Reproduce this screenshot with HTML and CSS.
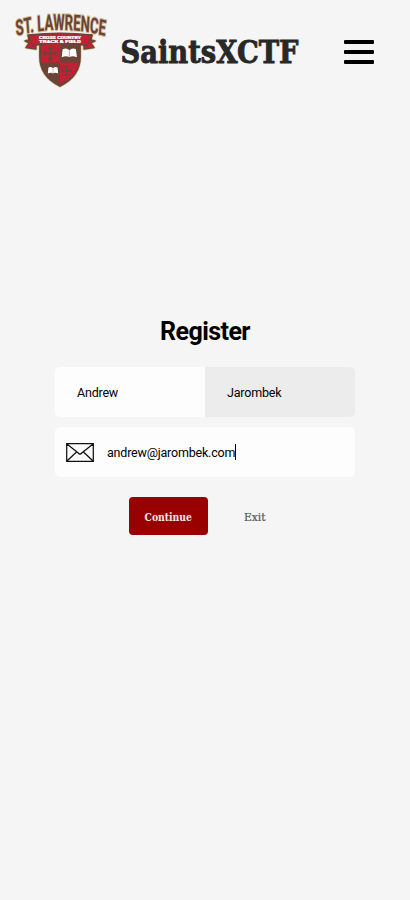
FILE: index.html
```html
<!DOCTYPE html>
<html lang="en">
<head>
<meta charset="utf-8">
<meta name="viewport" content="width=device-width, initial-scale=1">
<title>SaintsXCTF</title>
<link rel="stylesheet" href="styles.css">
</head>
<body>
<header class="nav">
  <svg class="logo" viewBox="10 8 100 84" role="img">
    <defs>
      <path id="arch" d="M27 36 Q100 23.8 175 36"/>
      <path id="shield" d="M40 42 Q60 34 80 42 L80 57 C80 71 72 80 60 86 C48 80 40 71 40 57 Z"/>
      <clipPath id="shield-clip"><use href="#shield"/></clipPath>
      <g id="cross" fill="none" stroke="#6b4436" stroke-width="1.9"><path d="M-6 0H6M0-6V6M-5-2V2M5-2V2M-2-5H2M-2 5H2"/></g>
      <g id="book"><path d="M-7-4Q-3-6 0-3Q3-6 7-4L8 4Q3 2 0 4Q-3 2-8 4Z" fill="#fff"/><path d="M0-3V4" stroke="#a77" stroke-width=".7"/></g>
    </defs>
    <use href="#shield" fill="#6b4436" stroke="#d8c298" stroke-width="3"/>
    <g clip-path="url(#shield-clip)">
      <path fill="#6b4436" d="M38 36H82V88H38Z"/>
      <path fill="#c41f35" d="M41 41H60V62.5H41ZM60 62.5H79L76 74L60 84Z"/>
    </g>
    <use href="#shield" fill="none" stroke="#6b4436" stroke-width="1.7"/>
    <use href="#cross" transform="translate(50.4 53.5) scale(1.12)"/>
    <use href="#cross" transform="translate(66.5 70.7) scale(.88)"/>
    <use href="#book" transform="translate(69.3 53.3) scale(.95 1)"/>
    <use href="#book" transform="translate(53 70.5) scale(.65 .75)"/>
    <g stroke-linejoin="round">
      <path class="ribbon-edge" d="M28 35L36 37V49L26 47.5L29 43L25 41L29 40ZM92 35L84 37V49L94 47.5L91 43L95 41L91 40Z"/>
      <path class="ribbon" d="M28 35L36 37V49L26 47.5L29 43L25 41L29 40ZM92 35L84 37V49L94 47.5L91 43L95 41L91 40Z"/>
      <path class="ribbon" d="M28 35Q60 31.5 92 35L87 45.5Q60 41 33 45.5Z"/>
    </g>
    <text class="motto" x="60" y="39.2" textLength="42" lengthAdjust="spacingAndGlyphs">CROSS COUNTRY</text>
    <text class="motto" x="60" y="42.6" textLength="42" lengthAdjust="spacingAndGlyphs">TRACK &amp; FIELD</text>
    <g transform="scale(.6 1)">
      <text class="school"><textPath href="#arch" textLength="149" lengthAdjust="spacingAndGlyphs">ST. LAWRENCE</textPath></text>
    </g>
  </svg>
  <svg class="brand" viewBox="0 0 181 40" role="img"><text x="0.5" y="31" textLength="178" lengthAdjust="spacingAndGlyphs">SaintsXCTF</text></svg>
  <div class="menu"><i></i><i></i><i></i></div>
</header>
<main class="register">
  <h1>Register</h1>
  <div class="field names">
    <div class="name">Andrew</div>
    <div class="name last">Jarombek</div>
  </div>
  <div class="field email">
    <svg class="envelope" viewBox="0 0 28 19"><path d="M.7.7H27.3V18.3H.7ZM.7.7L12.2 10Q14 12 15.8 10L27.3.7M.7 18.3L10.5 9M27.3 18.3L17.5 9"/></svg>
    <span class="address">andrew@jarombek.com</span><i class="caret"></i>
  </div>
  <div class="actions">
    <div class="button"><svg viewBox="0 0 50 18"><text x="1.5" y="13" textLength="47.5" lengthAdjust="spacingAndGlyphs">Continue</text></svg></div>
    <div class="exit"><svg viewBox="0 0 24 18"><text x="1" y="13" textLength="21.5" lengthAdjust="spacingAndGlyphs">Exit</text></svg></div>
  </div>
</main>
</body>
</html>
```
FILE: styles.css
```css
* { box-sizing: border-box; }
body { margin: 0; min-height: 900px; background: #f5f5f5; color: #000; font-family: Roboto, sans-serif; }
svg { display: block; }
.nav { height: 100px; display: flex; align-items: flex-start; padding: 8px 36px 0 10px; }
.logo { width: 100px; height: 84px; }
.school { font: 700 22px Roboto, sans-serif; fill: #6b4436; stroke: #d8c298; stroke-width: 2.2px; paint-order: stroke; }
.motto { font: 700 2.8px Roboto, sans-serif; fill: #fff; stroke: #fff; stroke-width: .2px; text-anchor: middle; }
.ribbon { fill: #c41f35; stroke: #6b4436; stroke-width: 1.3; }
.ribbon-edge { fill: #d8c298; stroke: #d8c298; stroke-width: 2.8; }
.brand { width: 181px; height: 40px; margin: 24px 0 0 10px; font: 700 32px "Roboto Slab", "DejaVu Serif", serif; fill: #282828; stroke: #282828; stroke-width: .9px; overflow: visible; }
.menu { margin: 32px 0 0 auto; display: grid; gap: 6px; }
.menu i { width: 30px; height: 4px; background: #000; border-radius: 1px; }
.register { width: 300px; margin: 217px auto 0; }
h1 { margin: 0 0 35px; height: 15px; font-size: 25px; line-height: 30px; text-align: center; letter-spacing: -.55px; }
.field { display: flex; height: 50px; border-radius: 5px; background: #fdfdfd; overflow: hidden; font-size: 12.5px; letter-spacing: -.2px; }
.name { width: 150px; padding: 1px 22px 0; line-height: 50px; }
.last { background: #ececec; }
.email { margin-top: 10px; align-items: center; padding-left: 11px; }
.envelope { width: 28px; height: 19px; fill: none; stroke: #111; stroke-width: 1.25; }
.address { margin-left: 13px; padding-top: 1px; }
.caret { width: 1px; height: 16px; background: #000; }
.actions { display: flex; margin: 20px 0 0 74px; height: 38px; }
.button { width: 79px; height: 38px; border-radius: 4px; background: #990000; padding: 11px 0 0 14px; }
.actions svg { height: 18px; font: 11px "Roboto Slab", "DejaVu Serif", serif; overflow: visible; }
.button svg { width: 50px; fill: #f4e8e8; font-weight: 700; }
.exit { padding: 11px 0 0 35px; }
.exit svg { width: 24px; fill: #555; stroke: #555; stroke-width: .2px; }
```
